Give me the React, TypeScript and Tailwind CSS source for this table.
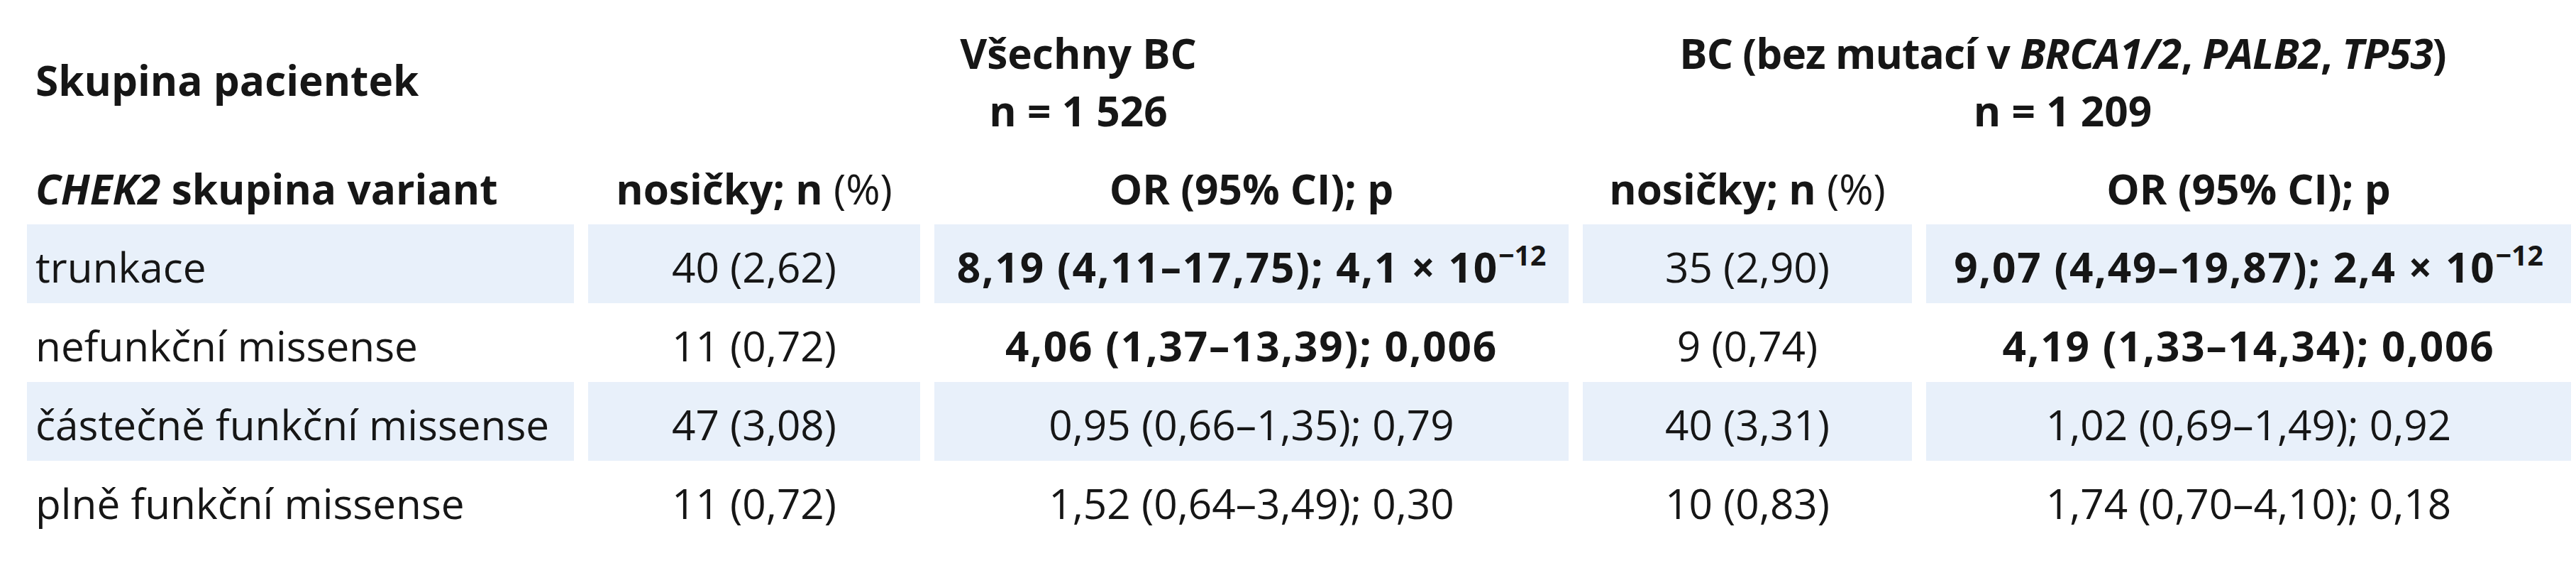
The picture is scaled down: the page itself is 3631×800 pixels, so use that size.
import React from "react";

type Row = {
  label: string;
  n1: string;
  or1: React.ReactNode;
  n2: string;
  or2: React.ReactNode;
  strong: boolean;
  shaded: boolean;
};

// superscripted exponent, e.g. 10^-12
const Exp = ({ base, exp }: { base: string; exp: string }) => (
  <>
    {base}
    <sup className="text-[0.67em] -top-[0.62em] tracking-normal">{exp}</sup>
  </>
);

const rows: Row[] = [
  {
    label: "trunkace",
    n1: "40 (2,62)",
    or1: <>8,19 (4,11–17,75); 4,1 × <Exp base="10" exp="−12" /></>,
    n2: "35 (2,90)",
    or2: <>9,07 (4,49–19,87); 2,4 × <Exp base="10" exp="−12" /></>,
    strong: true,
    shaded: true,
  },
  {
    label: "nefunkční missense",
    n1: "11 (0,72)",
    or1: "4,06 (1,37–13,39); 0,006",
    n2: "9 (0,74)",
    or2: "4,19 (1,33–14,34); 0,006",
    strong: true,
    shaded: false,
  },
  {
    label: "částečně funkční missense",
    n1: "47 (3,08)",
    or1: "0,95 (0,66–1,35); 0,79",
    n2: "40 (3,31)",
    or2: "1,02 (0,69–1,49); 0,92",
    strong: false,
    shaded: true,
  },
  {
    label: "plně funkční missense",
    n1: "11 (0,72)",
    or1: "1,52 (0,64–3,49); 0,30",
    n2: "10 (0,83)",
    or2: "1,74 (0,70–4,10); 0,18",
    strong: false,
    shaded: false,
  },
];

export default function App() {
  return (
    <div className="w-[3631px] h-[800px] bg-white text-[#161616] text-[58.5px] leading-[81px] pl-[38px] font-['Open_Sans',sans-serif]">
      <div className="grid grid-cols-[771px_468px_894px_464px_909px] gap-x-[20px]">
        {/* group header */}
        <div className="h-[206px] pt-[34px] pl-[12px] font-bold">
          <div className="h-[162px] pb-[5px] flex items-center">Skupina pacientek</div>
        </div>
        <div className="col-span-2 h-[206px] pt-[34px] font-bold text-center">
          <div>Všechny BC</div>
          <div>n = 1 526</div>
        </div>
        <div className="col-span-2 h-[206px] pt-[34px] pr-[40px] font-bold text-center">
          <div className="tracking-[-0.9px]">
            BC (bez mutací v <i>BRCA1/2</i>, <i>PALB2</i>, <i>TP53</i>)
          </div>
          <div>n = 1 209</div>
        </div>

        {/* column header */}
        <div className="h-[110px] pt-[8px] flex items-center pl-[12px] font-bold">
          <span>
            <i>CHEK2</i> skupina variant
          </span>
        </div>
        <div className="h-[110px] pt-[8px] flex items-center justify-center">
          <span>
            <b>nosičky; n</b> (%)
          </span>
        </div>
        <div className="h-[110px] pt-[8px] flex items-center justify-center font-bold">OR (95% CI); p</div>
        <div className="h-[110px] pt-[8px] flex items-center justify-center">
          <span>
            <b>nosičky; n</b> (%)
          </span>
        </div>
        <div className="h-[110px] pt-[8px] flex items-center justify-center font-bold">OR (95% CI); p</div>

        {rows.map((r) => {
          const bg = r.shaded ? "bg-[#e8f0fa]" : "bg-white";
          const num = r.strong ? "font-bold tracking-[1.8px]" : "";
          return (
            <React.Fragment key={r.label}>
              <div className={`h-[111px] pt-[8px] flex items-center pl-[12px] ${bg}`}>{r.label}</div>
              <div className={`h-[111px] pt-[8px] flex items-center justify-center ${bg}`}>{r.n1}</div>
              <div className={`h-[111px] pt-[8px] flex items-center justify-center ${bg} ${num}`}>
                <span>{r.or1}</span>
              </div>
              <div className={`h-[111px] pt-[8px] flex items-center justify-center ${bg}`}>{r.n2}</div>
              <div className={`h-[111px] pt-[8px] flex items-center justify-center ${bg} ${num}`}>
                <span>{r.or2}</span>
              </div>
            </React.Fragment>
          );
        })}
      </div>
    </div>
  );
}
